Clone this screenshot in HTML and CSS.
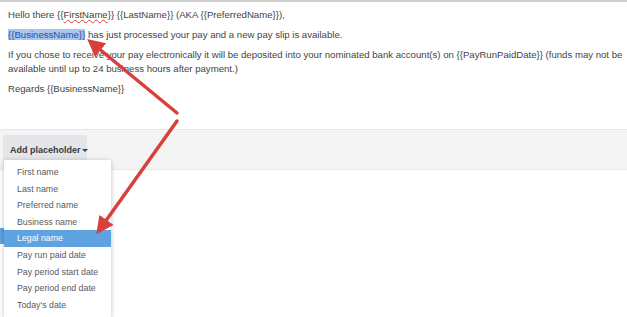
FILE: index.html
```html
<!DOCTYPE html>
<html lang="en">
<head>
    <meta charset="UTF-8">
    <title>Pay slip email template</title>
    <link rel="stylesheet" href="styles.css">
</head>
<body>
    <div class="editor">
        <div class="editor-body">
            <p>Hello there {{<span class="misspelt">FirstName</span>}} {{LastName}} (AKA {{PreferredName}}),</p>
            <p><span class="selected">{{BusinessName}}</span> has just processed your pay and a new pay slip is available.</p>
            <p>If you chose to receive your pay electronically it will be deposited into your nominated bank account(s) on {{PayRunPaidDate}} (funds may not be available until up to 24 business hours after payment.)</p>
            <p>Regards {{BusinessName}}</p>
        </div>
        <div class="toolbar">
            <div class="dropdown">
                <button class="btn">Add placeholder<span class="caret"></span></button>
                <ul class="menu">
                    <li>First name</li>
                    <li>Last name</li>
                    <li>Preferred name</li>
                    <li>Business name</li>
                    <li class="active">Legal name</li>
                    <li>Pay run paid date</li>
                    <li>Pay period start date</li>
                    <li>Pay period end date</li>
                    <li>Today's date</li>
                </ul>
            </div>
        </div>
    </div>
    <div class="below">
        <span class="tab"></span>
    </div>

    <svg class="arrows" width="627" height="317" viewBox="0 0 627 317">
        <defs>
            <marker id="head" markerWidth="5" markerHeight="5" refX="3.2" refY="2.5" orient="auto" markerUnits="strokeWidth">
                <path d="M0,0 L5,2.5 L0,5 z" fill="#d8403c"/>
            </marker>
        </defs>
        <line x1="177" y1="113" x2="92" y2="43" stroke="#d8403c" stroke-width="3.5" stroke-linecap="round" marker-end="url(#head)"/>
        <line x1="177" y1="121" x2="100" y2="229" stroke="#d8403c" stroke-width="3.5" stroke-linecap="round" marker-end="url(#head)"/>
    </svg>
</body>
</html>
```

FILE: styles.css
```css
body, html {
    margin: 0;
    height: 100%;
    font-family: "Liberation Sans", Arial, sans-serif;
    background: #fff;
    overflow: hidden;
}
.editor {
    border-top: 2px solid #cfcfcf;
}
.editor-body {
    padding: 6px 0 0 8px;
    height: 121px;
    font-size: 9.6px;
    line-height: 14px;
    color: #444;
}
.editor-body p {
    margin: 0 0 6px;
}
.misspelt {
    text-decoration: underline wavy #e04040;
    text-decoration-thickness: 1px;
}
.selected {
    background: #a8c6ef;
    color: #2a4fa0;
}
.toolbar {
    background: #f4f4f4;
    border-top: 1px solid #e6e6e6;
    border-bottom: 1px solid #e9e9e9;
    height: 41px;
    padding: 5px 3px 0;
    box-sizing: border-box;
}
.dropdown {
    position: relative;
    display: inline-block;
}
.btn {
    font-family: inherit;
    font-size: 9px;
    font-weight: bold;
    color: #3a3a3a;
    background: #e4e6e9;
    border: none;
    border-radius: 2px;
    height: 29px;
    width: 84px;
    padding: 0 0 0 7px;
    text-align: left;
    white-space: nowrap;
}
.caret {
    display: inline-block;
    margin-left: 1px;
    vertical-align: middle;
    border-left: 3px solid transparent;
    border-right: 3px solid transparent;
    border-top: 3px solid #444;
}
.menu {
    position: absolute;
    left: 1px;
    top: 25px;
    width: 107px;
    height: 157px;
    margin: 0;
    padding: 4px 0 0;
    list-style: none;
    background: #fff;
    box-shadow: 0 1px 5px rgba(0, 0, 0, 0.25);
    z-index: 2;
    box-sizing: border-box;
}
.menu li {
    font-size: 8.8px;
    line-height: 16.6px;
    padding-left: 13px;
    color: #5a5a5a;
    white-space: nowrap;
}
.menu li.active {
    background: #5ea3e0;
    color: #fff;
}
.below {
    padding-top: 58px;
}
.tab {
    display: block;
    width: 20px;
    height: 16px;
    background: #5ea3e0;
}
.arrows {
    position: absolute;
    left: 0;
    top: 0;
    z-index: 3;
    pointer-events: none;
}
```
